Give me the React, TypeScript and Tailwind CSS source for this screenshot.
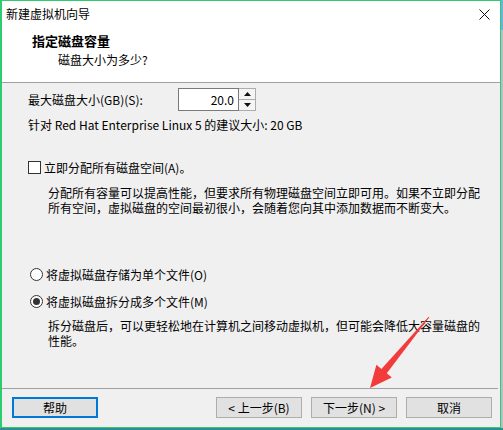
import React from "react";

const font = "font-['Noto_Sans_CJK_SC','Microsoft_YaHei',sans-serif]";

function WizardButton({ label, focused }: { label: string; focused?: boolean }) {
  return (
    <button
      className={`h-[21px] w-[86px] bg-[#e1e1e1] text-[12px] leading-none text-black ${
        focused ? "border-2 border-[#0078d7]" : "border border-[#adadad]"
      }`}
    >
      {label}
    </button>
  );
}

function Radio({ checked, label }: { checked?: boolean; label: string }) {
  return (
    <div className="flex h-[15px] items-center pl-[28px] leading-[15px]">
      <span className="mr-[3px] flex h-[13px] w-[13px] items-center justify-center rounded-full border border-[#333] bg-white">
        {checked && <span className="h-[7px] w-[7px] rounded-full bg-[#333]" />}
      </span>
      {label}
    </div>
  );
}

export default function App() {
  return (
    <div className={`relative h-[430px] w-[503px] overflow-hidden bg-[#b9bec4] ${font} text-[12px] text-black`}>
      <div className="absolute bottom-0 left-0 h-[2px] w-full bg-[#2f8e94]" />
      <div className="absolute right-0 top-0 h-[30px] w-[2px] bg-[#6fb0dc]" />

      <div className="flex h-[428px] w-[501px] flex-col border border-l-2 border-[#2ecc71] bg-[#f0f0f0]">
        {/* title bar + header */}
        <div className="bg-white">
          <div className="flex h-[26px] items-center justify-between pl-[4px] pr-[10px]">
            <span>新建虚拟机向导</span>
            <svg width="11" height="11" viewBox="0 0 11 11" className="mt-[1px]">
              <path d="M0.5 0.5 L10.5 10.5 M10.5 0.5 L0.5 10.5" stroke="#111" strokeWidth="1" />
            </svg>
          </div>
          <div className="h-[55px]">
            <div className="pl-[30px] pt-[6px] text-[13px] font-bold leading-[16px]">指定磁盘容量</div>
            <div className="pl-[56px] pt-[3px] leading-[16px]">磁盘大小为多少?</div>
          </div>
        </div>
        <div className="h-px bg-[#a0a0a0]" />

        {/* content */}
        <div className="flex-1">
          <div className="mt-[5px] flex h-[23px] items-center pl-[26px]">
            <span className="w-[150px]">最大磁盘大小(GB)(S):</span>
            <div className="flex h-[23px]">
              <div className="flex w-[61px] items-center justify-end border border-[#7a7a7a] bg-white pr-[4px]">20.0</div>
              <div className="flex w-[17px] flex-col border border-l-0 border-[#adadad]">
                <div className="flex flex-1 items-center justify-center border-b border-[#adadad] bg-[#f5f5f5]">
                  <svg width="7" height="4" viewBox="0 0 7 4">
                    <path d="M3.5 0 L7 4 L0 4 Z" fill="#111" />
                  </svg>
                </div>
                <div className="flex flex-1 items-center justify-center bg-[#f5f5f5]">
                  <svg width="7" height="4" viewBox="0 0 7 4">
                    <path d="M0 0 L7 0 L3.5 4 Z" fill="#111" />
                  </svg>
                </div>
              </div>
            </div>
          </div>

          <div className="mt-[6px] pl-[26px] leading-[15px]">针对 Red Hat Enterprise Linux 5 的建议大小: 20 GB</div>

          <div className="mt-[28px] flex h-[15px] items-center pl-[26px] leading-[15px]">
            <span className="mr-[3px] h-[13px] w-[13px] border border-[#333] bg-white" />
            立即分配所有磁盘空间(A)。
          </div>
          <div className="mt-[10px] pl-[46px] pr-[10px] leading-[15px]">
            <div>分配所有容量可以提高性能，但要求所有物理磁盘空间立即可用。如果不立即分配</div>
            <div>所有空间，虚拟磁盘的空间最初很小，会随着您向其中添加数据而不断变大。</div>
          </div>

          <div className="mt-[52px]">
            <Radio label="将虚拟磁盘存储为单个文件(O)" />
          </div>
          <div className="mt-[12px]">
            <Radio checked label="将虚拟磁盘拆分成多个文件(M)" />
          </div>
          <div className="mt-[9px] pl-[46px] leading-[15px]">
            <div>拆分磁盘后，可以更轻松地在计算机之间移动虚拟机，但可能会降低大容量磁盘的</div>
            <div>性能。</div>
          </div>
        </div>

        <div className="mr-[2px] h-px bg-[#a0a0a0]" />
        {/* buttons */}
        <div className="flex h-[38px] pl-[10px] pt-[8px]">
          <WizardButton label="帮助" focused />
          <div className="ml-[118px] flex gap-[9px]">
            <WizardButton label="< 上一步(B)" />
            <WizardButton label="下一步(N) >" />
            <WizardButton label="取消" />
          </div>
        </div>
      </div>

      {/* red annotation arrow */}
      <svg className="pointer-events-none absolute left-0 top-0" width="503" height="430">
        <polygon
          points="428.6,316.7 381.4,368.9 376.4,364.7 370,388 391.8,377.5 386.8,373.3 429.4,317.3"
          fill="#f23c3c"
        />
      </svg>
    </div>
  );
}
